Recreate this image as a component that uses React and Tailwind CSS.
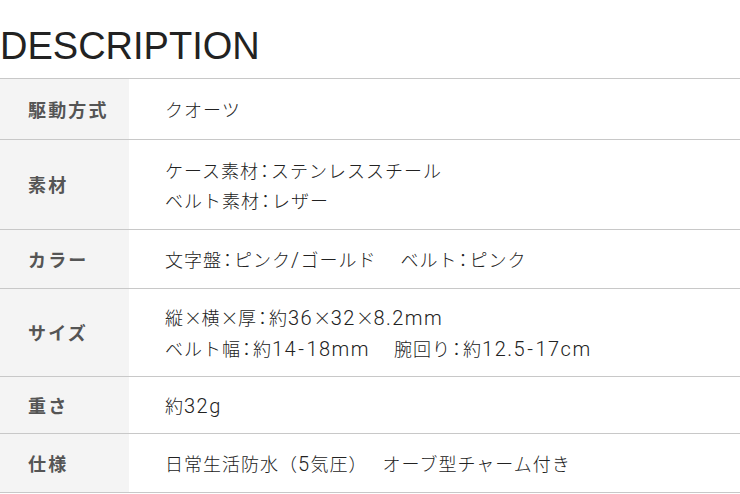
function Line({ text }) {
  const tokens = text.split(/(：|×|[A-Za-z0-9.\-\/]+)/).filter((t) => t !== "" && t !== undefined);
  return (
    <div>
      {tokens.map((t, i) => {
        if (t === "：")
          return (
            <span key={i} className="[font-feature-settings:'palt'] mx-[1px]">：</span>
          );
        if (t === "×")
          return (
            <span key={i} className="tracking-[-1.5px] mr-[1px]">×</span>
          );
        if (/^[A-Za-z0-9.\-\/]+$/.test(t))
          return (
            <span key={i} className="font-['Roboto',sans-serif] text-[20px] font-light tracking-[1.5px]">
              {t.split(/(-)/).map((s, j) =>
                s === "-" ? (
                  <span key={j} className="mx-[1px]">-</span>
                ) : (
                  <span key={j}>{s}</span>
                )
              )}
            </span>
          );
        return <span key={i}>{t}</span>;
      })}
    </div>
  );
}

export default function App() {
  const rows = [
    { label: "駆動方式", lines: ["クオーツ"], h: "h-[60px]" },
    { label: "素材", lines: ["ケース素材：ステンレススチール", "ベルト素材：レザー"], h: "h-[89px]" },
    { label: "カラー", lines: ["文字盤：ピンク/ゴールド　 ベルト：ピンク"], h: "h-[58px]" },
    { label: "サイズ", lines: ["縦×横×厚：約36×32×8.2mm", "ベルト幅：約14-18mm　 腕回り：約12.5-17cm"], h: "h-[87px]" },
    { label: "重さ", lines: ["約32g"], h: "h-[56px]" },
    { label: "仕様", lines: ["日常生活防水（5気圧）　 オーブ型チャーム付き"], h: "h-[58px]" },
  ];
  return (
    <div className="w-[740px] h-[494px] bg-white overflow-hidden">
      <div className="pt-[27px] pb-[13px] border-b border-[#c8c8c8] text-[38px] leading-[38px] text-[#222] font-['Liberation_Sans',Arial,sans-serif]">
        DESCRIPTION
      </div>
      <div>
        {rows.map((r) => (
          <div key={r.label} className={`flex border-b border-[#c8c8c8] box-content ${r.h}`}>
            <div className="w-[129px] shrink-0 bg-[#f4f4f4] pl-[28px] flex items-center text-[18px] font-bold text-[#555] tracking-[0.12em] font-['Noto_Sans_CJK_JP',sans-serif]">
              {r.label}
            </div>
            <div className="pl-[36px] flex flex-col justify-center text-[18px] leading-[30px] text-[#222] tracking-[1px] font-light font-['Noto_Sans_CJK_JP',sans-serif] whitespace-pre">
              {r.lines.map((l, i) => (
                <Line key={i} text={l} />
              ))}
            </div>
          </div>
        ))}
      </div>
    </div>
  );
}
